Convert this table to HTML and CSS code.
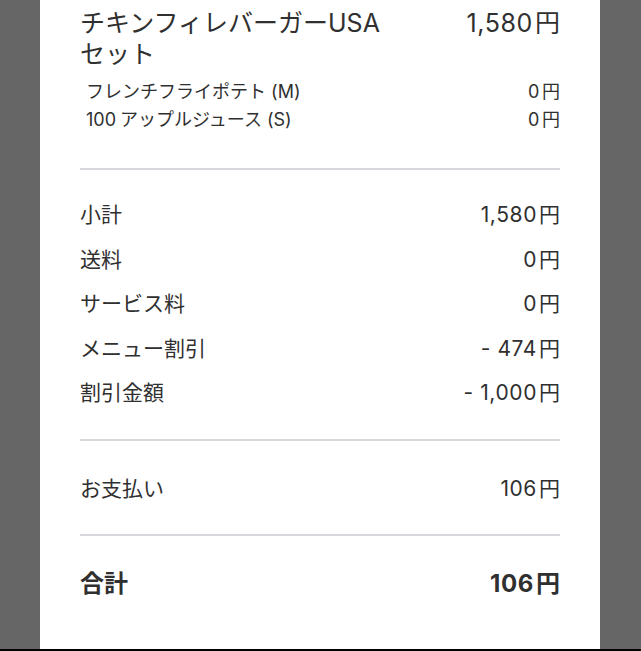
FILE: index.html
```html
<!DOCTYPE html>
<html lang="ja">
<head>
<meta charset="utf-8">
<link rel="stylesheet" href="styles.css">
</head>
<body>
<div class="screen">
  <div class="panel">
    <section class="block items">
      <div class="item-row">
        <div class="item-name">チキンフィレバーガーUSAセット</div>
        <div class="item-price price">1,580<span class="yen">円</span></div>
      </div>
      <ul class="options">
        <li class="option"><span>フレンチフライポテト (M)</span><span class="price">0<span class="yen">円</span></span></li>
        <li class="option"><span><span class="num">100</span>アップルジュース (S)</span><span class="price">0<span class="yen">円</span></span></li>
      </ul>
    </section>
    <section class="block summary">
      <div class="row"><span>小計</span><span class="price">1,580<span class="yen">円</span></span></div>
      <div class="row"><span>送料</span><span class="price">0<span class="yen">円</span></span></div>
      <div class="row"><span>サービス料</span><span class="price">0<span class="yen">円</span></span></div>
      <div class="row"><span>メニュー割引</span><span class="price">- 474<span class="yen">円</span></span></div>
      <div class="row"><span>割引金額</span><span class="price">- 1,000<span class="yen">円</span></span></div>
    </section>
    <section class="block payment">
      <div class="row"><span>お支払い</span><span class="price">106<span class="yen">円</span></span></div>
    </section>
    <section class="total">
      <div class="row total-row"><span>合計</span><span class="price">106<span class="yen">円</span></span></div>
    </section>
  </div>
  <div class="bottom-bar"></div>
</div>
</body>
</html>
```

FILE: styles.css
```css
* { box-sizing: border-box; }
html, body {
  margin: 0;
  padding: 0;
  background: #666666;
}
body {
  font-family: "Inter", "Noto Sans CJK JP", sans-serif;
  color: #303030;
}
.screen {
  display: flex;
  flex-direction: column;
  height: 651px;
}
.panel {
  flex: 1;
  margin: 0 41px 0 40px;
  background: #ffffff;
  padding: 0 40px 0 40px;
}
.bottom-bar {
  height: 2px;
  background: #000000;
}
.block {
  border-bottom: 2px solid #d7d7dc;
}
.items {
  padding: 8px 0 34px;
}
.item-row {
  display: flex;
  justify-content: space-between;
  font-size: 25px;
  line-height: 31px;
}
.item-name {
  width: 318px;
}
.item-price {
  white-space: nowrap;
}
.price {
  letter-spacing: 0.6px;
  white-space: nowrap;
}
.yen {
  margin-left: 2px;
  letter-spacing: 0;
}
.num {
  margin-right: 4px;
}
.options {
  list-style: none;
  margin: 8px 0 0;
  padding: 0 0 0 6px;
}
.option {
  display: flex;
  justify-content: space-between;
  font-size: 18px;
  line-height: 28px;
}
.row {
  display: flex;
  justify-content: space-between;
  font-size: 21px;
}
.summary {
  padding: 23px 0 23px;
}
.summary .row {
  line-height: 44.5px;
}
.payment {
  padding: 33px 0 30px;
}
.payment .row {
  line-height: 30px;
}
.total {
  padding: 33px 0 0;
}
.total-row {
  font-size: 24px;
  font-weight: 700;
  line-height: 30px;
}
```
